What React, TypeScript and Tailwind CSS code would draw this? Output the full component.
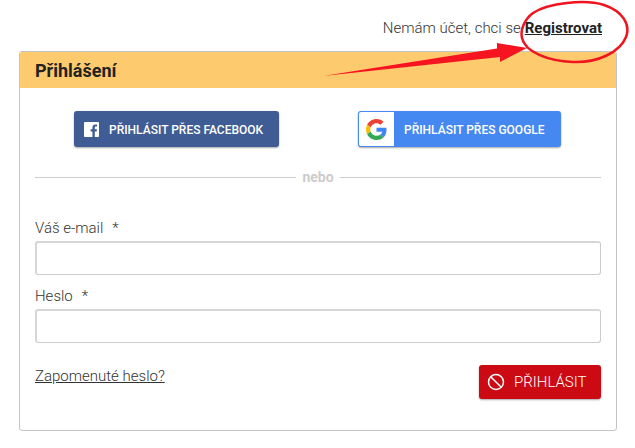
import React from 'react';
import { Ban } from 'lucide-react';

const GoogleLogo = () => (
  <svg viewBox="0 0 48 48" className="w-[21px] h-[21px]">
    <path fill="#EA4335" d="M24 9.5c3.5 0 6.7 1.2 9.2 3.6l6.9-6.9C35.9 2.4 30.5 0 24 0 14.6 0 6.5 5.4 2.6 13.2l8 6.2C12.5 13.7 17.800 9.500 24 9.500z" />
    <path fill="#4285F4" d="M46.900 24.500c0-1.600-.1-3.100-.4-4.500H24v9h12.900c-.6 3-2.200 5.500-4.700 7.200l7.700 6c4.500-4.200 7-10.300 7-17.700z" />
    <path fill="#FBBC05" d="M10.500 28.600c-.5-1.400-.8-3-.8-4.600s.3-3.200.8-4.600l-8-6.200C.9 16.400 0 20.100 0 24s.9 7.600 2.600 10.800l7.900-6.200z" />
    <path fill="#34A853" d="M24 48c6.500 0 11.900-2.100 15.900-5.800l-7.700-6c-2.200 1.400-4.900 2.300-8.200 2.300-6.200 0-11.500-4.200-13.400-9.900l-8 6.200C6.500 42.600 14.600 48 24 48z" />
  </svg>
);

const FacebookLogo = () => (
  <svg viewBox="0 0 16 16" className="w-[15px] h-[15px]">
    <path fill="#fff" d="M1 0h14a1 1 0 0 1 1 1v14a1 1 0 0 1-1 1h-3.500v-6h2l.3-2.400h-2.300V6.100c0-.7.2-1.200 1.200-1.200h1.200V2.800c-.2 0-1-.1-1.800-.1-1.800 0-3.100 1.100-3.100 3.200v1.700h-2V10h2v6H1a1 1 0 0 1-1-1V1a1 1 0 0 1 1-1z" />
  </svg>
);

const Field = ({ label, type }: { label: string; type: string }) => (
  <div>
    <label className="block text-[15px] leading-[20px] font-light text-[#333] mb-[3px]">
      {label}
      <span className="ml-[9px]">*</span>
    </label>
    <input
      type={type}
      className="block w-full h-[34px] bg-white rounded-[3px] border border-[#ccc] border-t-2 border-l-2 border-t-[#d6d6d6] border-l-[#d6d6d6] outline-none"
    />
  </div>
);

export default function App() {
  return (
    <div className="relative w-[635px] h-[448px] bg-white overflow-hidden font-['Roboto',sans-serif]">
      <div className="flex justify-end pr-[33px] pt-[18px] h-[51px] text-[15px] leading-[20px] text-[#333]">
        <span className="font-light mr-[4px]">Nemám účet, chci se</span>
        <a href="#" className="font-bold underline text-[#222]">Registrovat</a>
      </div>

      <div className="mx-[19px] w-[598px] h-[380px] border border-[#c4c4c4] rounded-[3px]">
        <div className="h-[36px] bg-[#fdcb6e] flex items-center px-[15px] rounded-t-[2px]">
          <h2 className="text-[18px] font-bold text-[#222]">Přihlášení</h2>
        </div>

        <div className="px-[15px]">
          <div className="flex pt-[23px] pl-[39px]">
            <button className="flex items-center w-[205px] h-[36px] bg-[#3f5c94] rounded-[3px] shadow-[0_1px_2px_rgba(0,0,0,0.35)] text-white text-[12px] font-medium pl-[10px]">
              <FacebookLogo />
              <span className="ml-[10px] pt-[2px]">PŘIHLÁSIT PŘES FACEBOOK</span>
            </button>
            <button className="flex items-center ml-[79px] w-[203px] h-[36px] bg-[#4688f1] rounded-[3px] shadow-[0_1px_2px_rgba(0,0,0,0.35)] text-white text-[12px] font-medium p-px">
              <span className="flex items-center justify-center w-[35px] h-[34px] bg-white rounded-l-[2px]">
                <GoogleLogo />
              </span>
              <span className="ml-[10px] pt-[2px]">PŘIHLÁSIT PŘES GOOGLE</span>
            </button>
          </div>

          <div className="flex items-center mt-[21px] gap-[5px]">
            <div className="flex-1 h-px bg-[#ccc]" />
            <span className="text-[14px] leading-[18px] font-bold text-[#ccc] px-[1px]">nebo</span>
            <div className="flex-1 h-px bg-[#ccc]" />
          </div>

          <div className="mt-[32px] flex flex-col gap-[11px]">
            <Field label="Váš e-mail" type="email" />
            <Field label="Heslo" type="password" />
          </div>

          <div className="flex justify-between items-start mt-[22px]">
            <a href="#" className="text-[15px] leading-[20px] font-light underline text-[#333] mt-px">Zapomenuté heslo?</a>
            <button className="flex items-center w-[122px] h-[34px] bg-[#cc0a13] rounded-[3px] shadow-[0_1px_2px_rgba(0,0,0,0.35)] text-white text-[15px] font-light pl-[8px]">
              <Ban className="w-[18px] h-[18px]" strokeWidth={2} />
              <span className="ml-[9px]">PŘIHLÁSIT</span>
            </button>
          </div>
        </div>
      </div>

      {/* red hand-drawn annotation on top of the page */}
      <svg className="absolute left-0 top-0 pointer-events-none" width="635" height="448" viewBox="0 0 635 448">
        <path fill="#f5141f" d="M323 76 L497 48.500 L497 43 L527 48 L500 62 L500 57 Z" />
        <path fill="none" stroke="#f0141f" strokeWidth="2.500" d="M533 13 C548 3 585 -1 604 5 C622 11 631 24 626 37 C620 52 598 63 573 62 C548 61 525 52 522 38 C520 29 525 19 533 13 Z" />
      </svg>
    </div>
  );
}
